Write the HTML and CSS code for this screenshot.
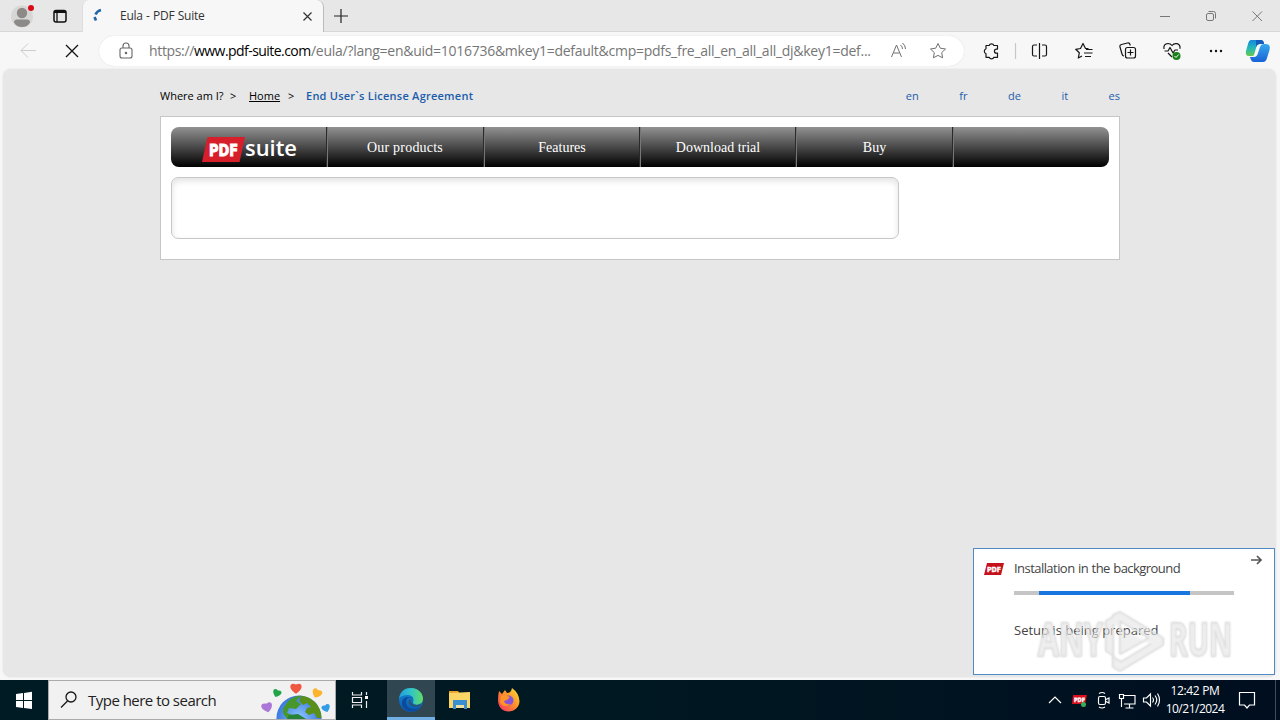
FILE: index.html
```html
<!DOCTYPE html>
<html lang="en">
<head>
<meta charset="utf-8">
<title>Eula - PDF Suite</title>
<link rel="stylesheet" href="styles.css">
</head>
<body>
<div class="screen">
  <header class="tabstrip">
    <div class="tab-tools">
      <svg width="82" height="32" fill="none"><circle cx="22" cy="16.500" r="11" fill="#d8d6d4"/><circle cx="22" cy="13" r="5.200" fill="#8c8987"/><path d="M14 22.500q0-3 3-3h10q3 0 3 3-2.500 4.500-8 4.500t-8-4.500z" fill="#8c8987"/><circle cx="31" cy="8" r="3" fill="#d80b18"/><rect x="54" y="10.500" width="12" height="11.500" rx="2" stroke="#111" stroke-width="1.500"/><path d="M54 11h12v2H54z" fill="#111"/><path d="M57 12v10" stroke="#111" stroke-width="1.300"/></svg>
    </div>
    <div class="tab">
      <svg class="spinner" width="16" height="20" fill="none" stroke="#2467a5" stroke-width="2.700"><path d="M9 4Q5 5 3.500 8.500"/><path d="M2.500 11l1.500 3.500"/></svg>
      <span class="tab-title">Eula - PDF Suite</span>
      <svg class="tab-close" width="12" height="12" stroke="#333" stroke-width="1.200"><path d="M1.500 2.500l8 8M9.500 2.500l-8 8"/></svg>
    </div>
    <svg class="new-tab" width="16" height="16" stroke="#222" stroke-width="1.200"><path d="M1 8h14M8 1v14"/></svg>
    <svg class="window-buttons" width="130" height="32" fill="none" stroke="#777"><path d="M10 16.500h10"/><rect x="56.500" y="13.500" width="7" height="7" rx="1.500"/><path d="M58.500 11.500h5q2 0 2 2v5M102.500 11.500l9.500 9.500M112 11.500l-9.500 9.500"/></svg>
  </header>
  <div class="toolbar">
    <svg class="nav-buttons" width="99" height="37" fill="none"><path d="M36 18.500H21M28 11.500l-7 7 7 7" stroke="#ccc"/><path d="M66 13l12 12M78 13l-12 12" stroke="#111" stroke-width="1.300"/></svg>
    <div class="address">
      <svg class="lock" width="14" height="18" fill="none" stroke="#666" stroke-width="1.100"><rect x="1" y="6" width="12" height="10" rx="2"/><path d="M4 6V4q0-3 3-3t3 3v2"/><circle cx="7" cy="11" r=".7" fill="#555"/></svg>
      <span class="url"><span class="url-scheme">https://</span><span class="url-host">www.pdf-suite.com</span><span class="url-path">/eula/?lang=en&amp;uid=1016736&amp;mkey1=default&amp;cmp=pdfs_fre_all_en_all_all_dj&amp;key1=def...</span></span>
      <svg class="address-icons" width="66" height="24" fill="none" stroke="#707070"><path d="M2.500 18L7.500 6l5 12M4.500 14h6M11.500 6q2 1.500 2 4M13.500 4q3 2.500 3 6" /><path d="M49 4.500l2.300 4.700 5.200.8-3.800 3.600.9 5.200-4.600-2.400-4.600 2.400.9-5.200-3.800-3.600 5.200-.8z" stroke-linejoin="round"/></svg>
    </div>
    <svg class="toolbar-icons" width="316" height="37" fill="none" stroke="#161616" stroke-width="1.200" stroke-linejoin="round">
      <path d="M22 13.500h3.200a2.500 2.500 0 0 1 4.700 0h3.600v3.600h-1a2 2 0 0 0 0 4.100h1v4.100h-3.600a2.500 2.500 0 0 1-4.700 0H22v-3.500a2.700 2.700 0 0 1 0-5z"/>
      <path d="M51.500 11v16" stroke="#c8c8c8"/>
      <path d="M73 13h-3q-1.500 0-1.500 1.500v8q0 1.500 1.500 1.500h3M78 13h3q1.500 0 1.500 1.500v8q0 1.500-1.500 1.500h-3M75.500 11v16"/>
      <path d="M124.500 16.500h-3l-2.500-5-2.500 5-4.800.8 3.600 3.500-1 5.200 3.700-2M122 17.500h6.500M120 21h8.500M121 24.500h6"/>
      <path d="M160 24q-1.500 0-2-2l-2-7q-.5-2 1.500-2.500l6-1.500q2-.5 2.500 1.500l.2 1"/><rect x="161.500" y="15.500" width="10" height="10.500" rx="2"/><path d="M166.500 17.500v6M163.500 20.500h6"/>
      <path d="M208 25l-4-4M200 17q-1-5 4-5.500 2.500 0 4 2 2-2.500 5-1.800 3.500 1 3 5M200.500 19h3.500l2-3.500 3 5.500 2-3h3"/><circle cx="212.500" cy="24" r="4" fill="#188018" stroke="none"/><path d="M210.500 24l1.500 1.500 2.700-3" stroke="#fff" stroke-width="1"/>
      <g fill="#111" stroke="none"><circle cx="247" cy="19" r="1.200"/><circle cx="252" cy="19" r="1.200"/><circle cx="257" cy="19" r="1.200"/></g>
      <defs><linearGradient id="cg" x1="0" y1="0" x2="0" y2="1"><stop stop-color="#1687db"/><stop offset=".5" stop-color="#22b9ba"/><stop offset="1" stop-color="#66c94e"/></linearGradient><linearGradient id="cb" x1="0" y1="0" x2="0" y2="1"><stop stop-color="#38a8ef"/><stop offset="1" stop-color="#1763d5"/></linearGradient></defs>
      <g stroke="none" transform="translate(-1)"><path d="M288 8h9q3 0 4 4h-4q-3 0-4 4l-2 7q-.5 1-2 1h-3q-4 0-3-5l2-7q1-4 3-4z" fill="url(#cg)"/><path d="M300 30h-9q-3 0-4-5h4q3 0 4-4l2-6q1-3 4-3h2q5 0 3.500 6l-2.500 8q-1 4-4 4z" fill="url(#cb)"/><path d="M293 8h5q3 0 3 4h-4q-3 0-4 3z" fill="#135bbd"/></g>
    </svg>
  </div>
  <main class="viewport">
    <div class="page">
      <div class="crumbs">
        <span class="where">Where am I?</span><span class="gt gt-first">&gt;</span><a class="home">Home</a><span class="gt">&gt;</span><b class="here">End User`s License Agreement</b>
        <nav class="langs"><a>en</a><a>fr</a><a>de</a><a>it</a><a>es</a></nav>
      </div>
      <div class="panel">
        <nav class="menu">
          <div class="menu-item">
            <svg width="155" height="40"><path d="M36.500 10H74l-5.500 25H31z" fill="#d71f2b"/><text class="logo-pdf" x="38" y="28.500" textLength="29" lengthAdjust="spacingAndGlyphs">PDF</text><text class="logo-suite" x="74" y="29" textLength="52" lengthAdjust="spacingAndGlyphs">suite</text></svg>
          </div>
          <div class="menu-item menu-products">Our products</div>
          <div class="menu-item">Features</div>
          <div class="menu-item">Download trial</div>
          <div class="menu-item">Buy</div>
          <div class="menu-item"></div>
        </nav>
        <div class="license-box"></div>
      </div>
    </div>
  </main>
  <footer class="taskbar">
    <svg class="start" width="48" height="40" fill="#fff"><path d="M16 14l7-1v7h-7zM24 12.900l8-1.100V20h-8zM16 21h7v7l-7-1zM24 21h8v8l-8-1z"/></svg>
    <div class="search">
      <svg class="search-icon" width="19" height="20" fill="none" stroke="#161616" stroke-width="1.300"><circle cx="11" cy="7" r="5"/><path d="M7.500 11L1 17.500"/></svg>
      <span class="search-text">Type here to search</span>
      <svg class="earth" width="74" height="38">
        <defs><radialGradient id="sea"><stop stop-color="#8fc7ff"/><stop offset="1" stop-color="#3978df"/></radialGradient><clipPath id="globe"><circle cx="38" cy="37" r="22.500"/></clipPath><path id="heart" d="M0 5C-8 0-5-6 0-3 5-6 8 0 0 5z"/></defs>
        <circle cx="38" cy="37" r="22.500" fill="url(#sea)"/>
        <g clip-path="url(#globe)"><path d="M23 26q6-11 18-12l-6 6 5 3-5 5-7-1-2 5 5 2-3 5q-9-7-5-13z" fill="#47972b"/><path d="M41 14q19 3 20 23h-5l-3-5-5 2-4-3 2-4 4-1-4-4-4 2-4-4z" fill="#5b8f1c"/><path d="M28 34l9-1 8 5H26z" fill="#25833a"/></g>
        <use href="#heart" transform="translate(35 7) scale(1.150)" fill="#f05743"/><use href="#heart" transform="translate(16 12) rotate(20) scale(.85)" fill="#21a447"/><use href="#heart" transform="translate(56 12) rotate(25)" fill="#fbb42b"/><use href="#heart" transform="translate(6 26) rotate(-15) scale(1.100)" fill="#aa77d8"/><use href="#heart" transform="translate(65 27) rotate(-20) scale(.85)" fill="#329ce7"/>
      </svg>
    </div>
    <svg class="task-view" width="51" height="40" fill="none" stroke="#eee" stroke-width="1.200"><path d="M16.500 12v3h9v-3M16.500 28v-3h9v3M16.500 17.500h9v5h-9zM30.500 12v3M30.500 21v7"/><path d="M29 16h3v3h-3z" fill="#fff" stroke="none"/></svg>
    <div class="edge-button">
      <svg width="48" height="37"><defs><linearGradient id="et"><stop stop-color="#249de0"/><stop offset=".5" stop-color="#31c4c8"/><stop offset="1" stop-color="#63dc65"/></linearGradient><linearGradient id="eb" x2="0" y2="1"><stop stop-color="#168bd9"/><stop offset="1" stop-color="#0b57ac"/></linearGradient></defs><circle cx="24" cy="20" r="12" fill="url(#eb)"/><path d="M12 19C13 11 18 8 24 8c8 0 12 6 12 11 0 6-8 7-10 4 2-6-2-8-5-8-4 0-8 1-9 4z" fill="url(#et)"/><path d="M26 18q-7-2-7 5 1 6 9 6 4 0 6-3-5 7-12 5-8-3-7-9 1-5 6-5 4 0 5 1z" fill="#0c4b9c"/><path d="M25 18q-3 1-1 5 3 4 10 1l-1 2q-8 2-11-3-1-4 3-5z" fill="#33505c"/></svg>
    </div>
    <svg class="apps" width="98" height="40"><defs><linearGradient id="ff" x1="1" y1="0" x2="0" y2="1"><stop stop-color="#ffe338"/><stop offset=".45" stop-color="#ff9428"/><stop offset="1" stop-color="#f32a69"/></linearGradient></defs><path d="M14 11h9l2 3h-11z" fill="#e9a126"/><path d="M14 13l21-1v16H14z" fill="#fbd565"/><path d="M18 20h14v9h-3v-4h-8v4h-3z" fill="#3a8fd2"/><path d="M21 25h8v3h-8z" fill="#eee0a0"/><path d="M64 11l3 3 3-4 2 3q4 0 5-5 7 5 7.500 13c0 6-5 10.500-11 10.500S63 27 63 20q0-5 1-9z" fill="url(#ff)"/><circle cx="73.500" cy="20.500" r="5" fill="#8654d5"/><path d="M66 16q4-2 6 0l3 1-3 3-3 1q1 4 7 3-8 5-11-2z" fill="#ff9527"/></svg>
    <svg class="tray" width="124" height="40" fill="none" stroke="#fff" stroke-width="1.150">
      <path d="M12 23l6-6 6 6"/><path d="M36 15h14l-2 9H35z" fill="#d8101e" stroke="none"/><text class="tray-pdf" x="37" y="21.500" textLength="11" lengthAdjust="spacingAndGlyphs">PDF</text><circle cx="46.500" cy="24.500" r="2.500" fill="#35ad5c" stroke="none"/>
      <rect x="61.500" y="16.500" width="7" height="8" rx="1.500"/><path d="M69 19.500l3-1.500v5l-3-1.500M62 13.500q3-2 6 0M62 27q3 2 6 0M86.500 15.500h11.500v8.500h-11M92.500 24v4M88.500 28h8M82.500 14.500h4v4h-4zM84.500 19v8"/>
      <path d="M106.500 18h3l4-4v12l-4-4h-3zM115.500 17.500q2 2.500 0 5M118 15.500q3.500 4.500 0 9M120.500 13.500q4 6.500 0 13"/>
    </svg>
    <div class="clock"><span>12:42 PM</span><span class="date">10/21/2024</span></div>
    <svg class="notice" width="53" height="40" fill="none" stroke="#fff" stroke-width="1.200"><path d="M12.500 12.500h15v12.500h-5l-2.500 3-2.500-3h-5z"/><path d="M48.500 0v40" stroke="#526069" stroke-width=".8"/></svg>
  </footer>
  <aside class="toast">
    <div class="toast-head">
      <svg class="toast-icon" width="20" height="12"><path d="M3 0h17l-3 12H0z" fill="#c5111b"/><text class="toast-pdf" x="3" y="8.500" textLength="14" lengthAdjust="spacingAndGlyphs">PDF</text></svg>
      <span class="toast-title">Installation in the background</span>
      <svg class="toast-arrow" width="14" height="12" fill="none" stroke="#555" stroke-width="1.700"><path d="M1 6h10M7 2l4 4-4 4"/></svg>
    </div>
    <div class="progress"><div class="progress-value"></div></div>
    <span class="toast-status">Setup is being prepared</span>
    <svg class="watermark" width="204" height="70">
      <g class="mark-shape"><text x="5" y="49" textLength="65" lengthAdjust="spacingAndGlyphs">ANY</text><text x="136" y="49" textLength="63" lengthAdjust="spacingAndGlyphs">RUN</text><path d="M87 5l43 26v7L87 64l-7-4V48l-7-4V14l7-4V8zM87 14v33l29-16zM80 17v33l8 5 30-18" /></g>
    </svg>
  </aside>
</div>
</body>
</html>
```
FILE: styles.css
```css
* { box-sizing: border-box; }
body { margin: 0; font-family: "Open Sans", "Noto Sans", sans-serif; }
svg { display: block; flex: none; }
.screen { position: relative; width: 1280px; height: 720px; display: flex; flex-direction: column; overflow: hidden; background: #f7f7f7; }
.tabstrip { height: 32px; flex: none; display: flex; align-items: center; background: #e7e7e7; border-bottom: 1px solid #d7d7d7; }
.tab-tools { width: 82px; }
.tab { align-self: stretch; height: 32px; width: 242px; display: flex; align-items: center; background: #f7f7f7; border-left: 1px solid #ddd; border-right: 1px solid #bbb; border-radius: 7px 7px 0 0; padding: 0 9px 1px 9px; }
.spinner { width: 16px; margin-right: 12px; }
.tab-title { width: 182px; font-size: 12px; letter-spacing: -.28px; word-spacing: .6px; white-space: nowrap; color: #333; }
.new-tab { margin-left: 9px; }
.window-buttons { margin-left: auto; }
.toolbar { height: 37px; flex: none; display: flex; align-items: center; background: #f7f7f7; }
.address { width: 865px; height: 30px; background: #fff; border-radius: 15px; display: flex; align-items: center; box-shadow: 0 0 1px #ccc; }
.lock { margin: 0 16px 0 20px; }
.url { display: flex; width: 740px; font-size: 14px; white-space: nowrap; color: #767676; line-height: 20px; }
.url-scheme { width: 45px; letter-spacing: -.35px; }
.url-host { width: 117px; color: #000; letter-spacing: -.55px; }
.url-path { letter-spacing: -.27px; }
.viewport { width: 1273px; height: 608px; flex: none; margin-left: 3px; background: #e7e7e7; border-radius: 8px; box-shadow: 0 0 2px #ddd; }
.page { width: 960px; margin: 0 0 0 157px; padding-top: 18px; }
.crumbs { display: flex; height: 18px; line-height: 18px; font-size: 11px; white-space: nowrap; color: #000; }
.where { width: 70px; }
.gt { width: 18px; }
.gt-first { width: 19px; }
.home { width: 32px; text-decoration: underline; margin-right: 7px; }
.here { font-weight: 600; letter-spacing: .24px; color: #1b5cab; }
.langs { display: flex; gap: 40.500px; margin-left: auto; color: #1b5cab; }
.panel { margin-top: 11px; width: 960px; height: 144px; padding: 10px; background: #fff; border: 1px solid #c6c6c6; }
.menu { width: 938px; height: 40px; display: grid; grid-template-columns: 157px 157px 156px 156px 157px 1fr; border-radius: 8px; overflow: hidden; background: linear-gradient(#929292, #000); }
.menu-item { line-height: 41px; padding-right: 1px; text-align: center; color: #fff; font-family: "Liberation Serif", serif; font-size: 14px; border-right: 1px solid #777; box-shadow: inset -1px 0 #292929; }
.menu-products { letter-spacing: .2px; padding-right: 2px; }
.menu-item:last-child { border: 0; box-shadow: none; }
.logo-pdf, .toast-pdf, .tray-pdf { font-family: "DejaVu Sans", sans-serif; font-weight: bold; fill: #fff; stroke: #fff; stroke-width: .4px; }
.logo-pdf { font-size: 16px; stroke-width: .9px; }
.logo-suite { font-family: "Open Sans", sans-serif; font-size: 22px; font-weight: 600; fill: #fff; }
.license-box { width: 728px; height: 62px; margin-top: 10px; border: 1px solid #c7c7c7; border-radius: 7px; box-shadow: inset 0 3px 6px #e2e2e2; }
.taskbar { height: 40px; flex: none; margin-top: 3px; display: flex; align-items: center; background: linear-gradient(90deg, #001b23 0%, #001821 50%, #000e20 100%); color: #fff; }
.search { width: 288px; height: 40px; display: flex; align-items: center; background: #f1f1f1; border: 1px solid #aaa; }
.search-icon { margin: 0 9px 0 11px; }
.search-text { width: 173px; color: #222; font-size: 15px; letter-spacing: -.52px; white-space: nowrap; }
.edge-button { width: 48px; height: 40px; background: #304650; border-bottom: 3px solid #72afe4; }
.tray { margin-left: auto; margin-right: 2px; }
.clock { width: 68px; margin: 0 -2px; display: flex; flex-direction: column; align-items: center; font-size: 12px; line-height: 18px; letter-spacing: -.35px; white-space: nowrap; }
.date { letter-spacing: -.5px; }
.toast { position: absolute; left: 973px; top: 548px; width: 302px; height: 127px; background: #fff; border: 1px solid #5189c3; padding: 0 10px; color: #444; font-size: 13px; }
.toast-head { display: flex; align-items: center; height: 40px; }
.toast-icon { margin-right: 10px; }
.toast-title { width: 236px; margin-top: -2px; letter-spacing: -.55px; word-spacing: .6px; white-space: nowrap; }
.toast-arrow { margin-top: -19px; }
.progress { width: 220px; height: 4px; margin: 2px 0 0 30px; background: #c5c5c5; }
.progress-value { width: 151px; height: 4px; margin-left: 25px; background: #1976df; }
.toast-status { display: block; margin: 26px 0 0 30px; line-height: 18px; letter-spacing: 0; }
.toast-pdf { font-size: 7px; }
.tray-pdf { font-size: 6px; }
.watermark { position: absolute; left: 59px; top: 58px; overflow: visible; filter: drop-shadow(0 0 1px #bbb); }
.mark-shape { fill: #fff; fill-opacity: .35; fill-rule: evenodd; stroke: #e4e4e4; stroke-width: 1px; font-family: "Liberation Sans Narrow", "Open Sans", sans-serif; font-size: 46px; font-weight: bold; }
```
